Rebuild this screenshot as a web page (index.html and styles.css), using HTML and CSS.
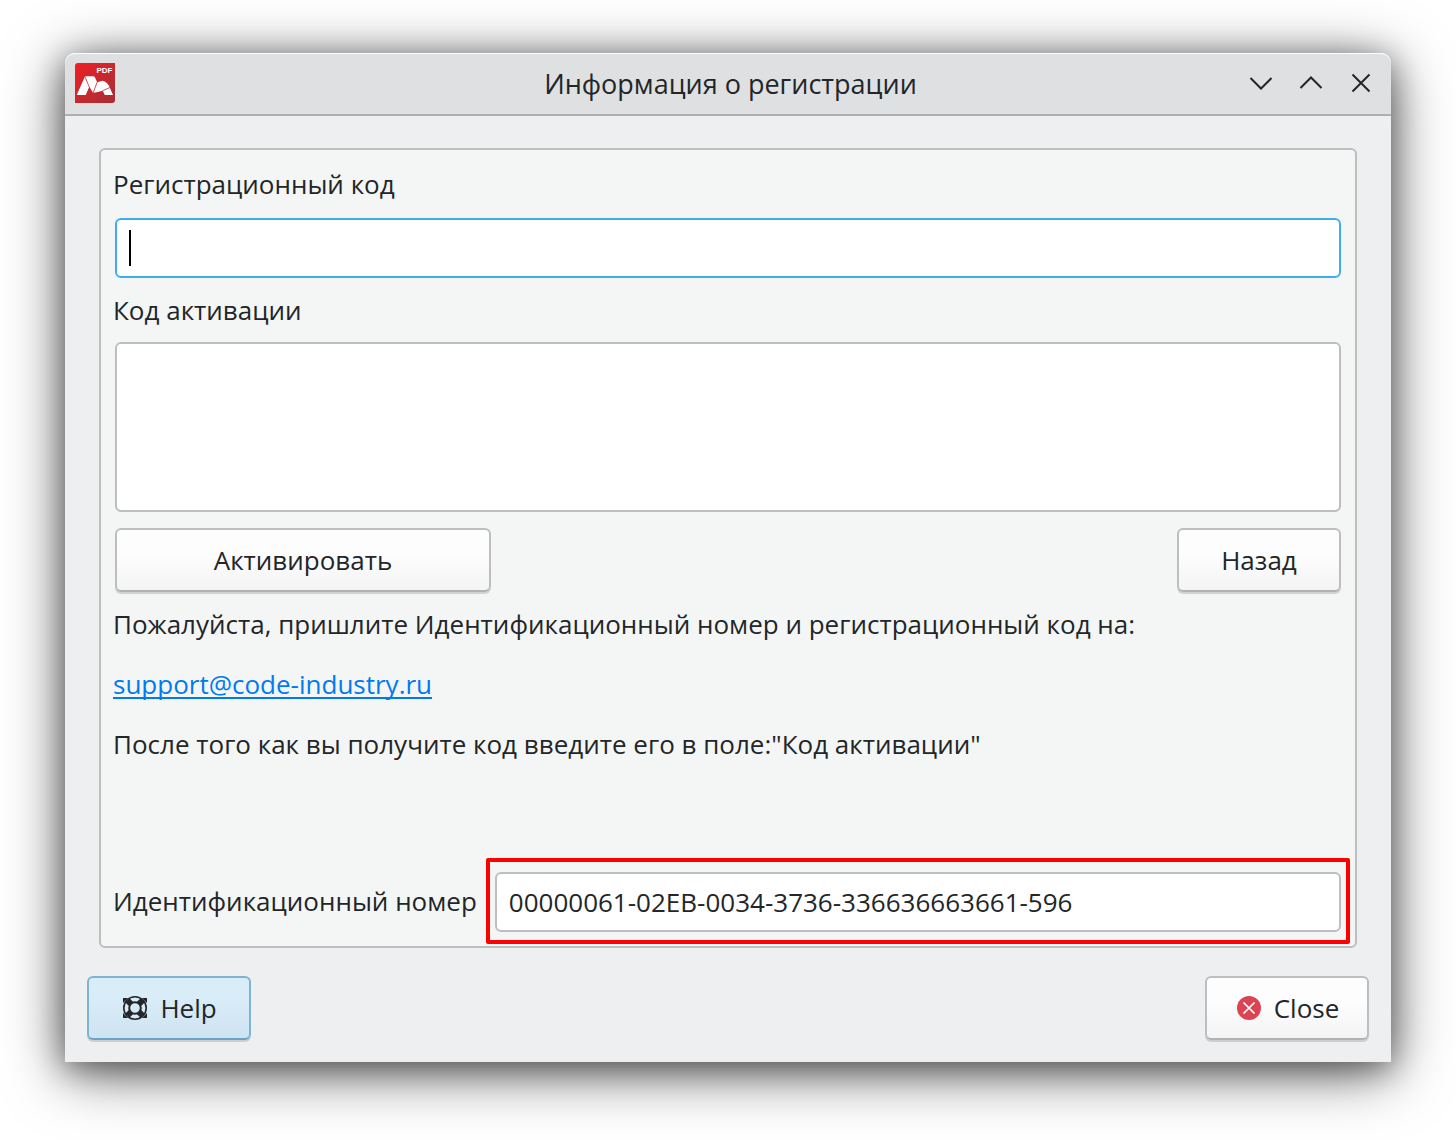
FILE: index.html
```html
<!DOCTYPE html>
<html lang="ru">
  <head>
    <meta charset="UTF-8" />
    <meta name="viewport" content="width=device-width, initial-scale=1.0" />
    <title>Информация о регистрации</title>
    <link rel="stylesheet" href="styles.css">
  </head>
  <body>

    <div class="window">

      <header class="titlebar">
        <svg class="logo" viewBox="0 0 40 40" aria-hidden="true">
          <defs>
            <linearGradient id="red" x1="0" y1="0" x2="1" y2="1">
              <stop offset="0" stop-color="#ee2024" />
              <stop offset="1" stop-color="#a52f36" />
            </linearGradient>
          </defs>
          <path d="M3 0H40V37a3 3 0 0 1-3 3H0V3a3 3 0 0 1 3-3z" fill="url(#red)" />
          <path d="M1.700 32L9.700 14Q10 13.300 11 13.300H18.500Q19.300 13.300 19.700 14L22.200 19.200 27.700 17.700Q33 19.500 34.500 24L38 32H29.700L27.800 27.700 20.500 29.500H18L14.300 23.700 10.700 32z" fill="#fff" />
          <path d="M10 14L14.500 24.500M22.200 19L18.300 29.500M27.500 27.800L34.800 24.500" fill="none" stroke="#d0262b" stroke-width="0.800" />
          <text class="logo-text" x="21.500" y="10">PDF</text>
        </svg>
        <h1 class="title">Информация о регистрации</h1>
        <div class="window-buttons">
          <button class="window-button" type="button" aria-label="Свернуть">
            <svg viewBox="0 0 24 24"><path d="M1.500 7L12 17.500 22.500 7" /></svg>
          </button>
          <button class="window-button" type="button" aria-label="Развернуть">
            <svg viewBox="0 0 24 24"><path d="M1.500 17L12 6.500 22.500 17" /></svg>
          </button>
          <button class="window-button" type="button" aria-label="Закрыть">
            <svg viewBox="0 0 24 24"><path d="M3.500 3.500L20.500 20.500M20.500 3.500L3.500 20.500" /></svg>
          </button>
        </div>
      </header>

      <form class="content">
        <div class="panel">
          <label class="label" for="regcode">Регистрационный код</label>
          <div class="field focused">
            <input class="line-edit" id="regcode" type="text">
            <span class="caret"></span>
          </div>

          <label class="label" for="activation">Код активации</label>
          <textarea class="text-edit" id="activation"></textarea>

          <div class="actions">
            <button class="button activate" type="button">Активировать</button>
            <button class="button" type="button">Назад</button>
          </div>

          <div class="message">
            <p>Пожалуйста, пришлите Идентификационный номер и регистрационный код на:</p>
            <p><a href="mailto:support@code-industry.ru">support@code-industry.ru</a></p>
            <p>После того как вы получите код введите его в поле:"Код активации"</p>
          </div>

          <div class="id-row">
            <label class="label" for="idnumber">Идентификационный номер</label>
            <div class="field marked">
              <input class="line-edit" id="idnumber" type="text" value="00000061-02EB-0034-3736-336636663661-596" readonly>
            </div>
          </div>
        </div>

        <div class="footer">
          <button class="button with-icon help" type="button">
            <svg class="icon" viewBox="0 0 24 24" aria-hidden="true">
              <path d="M0 2H5L0 7zM24 2H19L24 7zM0 22H5L0 17zM24 22H19L24 17z" fill="#232629" />
              <circle cx="12" cy="12" r="11.200" fill="none" stroke="#232629" stroke-width="1.600" />
              <circle cx="12" cy="12" r="5.800" fill="none" stroke="#232629" stroke-width="2" />
              <path d="M4.500 4.500L8.200 8.200M19.500 4.500L15.800 8.200M4.500 19.500L8.200 15.800M19.500 19.500L15.800 15.800" stroke="#232629" stroke-width="6" />
            </svg>
            Help
          </button>
          <button class="button with-icon" type="button">
            <svg class="icon" viewBox="0 0 24 24" aria-hidden="true">
              <circle cx="12" cy="12" r="12" fill="#da4453" />
              <path d="M6.500 6.500L17.500 17.500M17.500 6.500L6.500 17.500" stroke="#fff" stroke-width="1.700" />
            </svg>
            Close
          </button>
        </div>
      </form>

    </div>

  </body>
</html>
```
FILE: styles.css
```css
* {
    box-sizing: border-box;
}

body {
    margin: 0;
    padding: 53px 65px 78px;
    background: #fff;
    color: #232629;
    font-family: "Open Sans", "Noto Sans", sans-serif;
    font-size: 26px;
    line-height: 36px;
}

.window {
    background: #eeeff1;
    border-radius: 10px 10px 0 0;
    box-shadow: 0 10px 60px rgba(0, 0, 0, 0.6), 0 6px 30px rgba(0, 0, 0, 0.4);
}

/* title bar */

.titlebar {
    display: grid;
    grid-template-columns: 1fr auto 1fr;
    align-items: center;
    height: 63px;
    padding: 0 5px 2px 10px;
    background: #dee0e2;
    border-bottom: 2px solid #adafb1;
    border-radius: 10px 10px 0 0;
    box-shadow: inset 0 1px 0 #fff;
}

.logo {
    width: 40px;
    height: 40px;
}

.logo-text {
    fill: #fff;
    font-family: "Liberation Sans", Arial, sans-serif;
    font-size: 8px;
    font-weight: bold;
}

.title {
    margin: 0;
    padding-top: 2px;
    font-size: 27px;
    font-weight: normal;
}

.window-buttons {
    display: flex;
    justify-content: flex-end;
}

.window-button {
    display: flex;
    align-items: center;
    justify-content: center;
    width: 50px;
    height: 50px;
    padding: 0;
    border: 0;
    background: none;
}

.window-button svg {
    width: 24px;
    height: 24px;
    fill: none;
    stroke: #232629;
    stroke-width: 2;
}

/* form */

.content {
    padding: 32px 22px 22px;
}

.panel {
    display: flex;
    flex-direction: column;
    gap: 14px;
    margin: 0 12px;
    padding: 16px 12px 14px;
    background: #f4f6f5;
    border: 2px solid #bcbebf;
    border-radius: 6px;
}

.field {
    position: relative;
    margin: 2px 2px 0;
}

.line-edit,
.text-edit {
    display: block;
    width: 100%;
    padding: 0 12px;
    background: #fff;
    border: 2px solid #bcbebf;
    border-radius: 6px;
    outline: none;
    color: #232629;
    font: inherit;
}

.line-edit {
    height: 60px;
}

.text-edit {
    width: auto;
    height: 170px;
    margin: 0 2px;
    padding: 10px 12px;
    resize: none;
}

.focused .line-edit {
    border-color: #3daee9;
}

.caret {
    position: absolute;
    top: 12px;
    left: 14px;
    width: 2px;
    height: 36px;
    background: #000;
}

.actions {
    display: flex;
    justify-content: space-between;
    margin: 2px 2px 0;
}

.button {
    display: flex;
    align-items: center;
    justify-content: center;
    gap: 13px;
    min-width: 164px;
    height: 64px;
    padding: 0;
    background: linear-gradient(#fdfdfd 40%, #f4f4f4);
    border: 2px solid #bcbebf;
    border-bottom-color: #b0b2b3;
    border-radius: 6px;
    box-shadow: 0 2px 0 rgba(0, 0, 0, 0.14);
    color: #232629;
    font: inherit;
}

.activate {
    width: 376px;
}

.message {
    display: flex;
    flex-direction: column;
    gap: 24px;
    padding-bottom: 94px;
}

.message p {
    margin: 0;
}

.message a {
    color: #007af4;
    text-decoration-thickness: 2px;
    text-underline-offset: 3px;
    text-decoration-skip-ink: none;
}

.id-row {
    display: flex;
    align-items: center;
    gap: 16px;
}

.id-row .field {
    flex: 1;
}

/* red frame round the id number */
.marked::after {
    content: "";
    position: absolute;
    inset: -14px -9px -12px;
    border: 4px solid #f00;
    border-radius: 2px;
    pointer-events: none;
}

/* bottom buttons */

.footer {
    display: flex;
    justify-content: space-between;
    margin-top: 28px;
}

.with-icon {
    padding-left: 2px;
}

.help {
    background: linear-gradient(#d8edf8 30%, #cfe4f1);
    border-color: #7cb4d2;
    border-bottom-color: #6ba4c3;
}

.icon {
    width: 24px;
    height: 24px;
}
```
